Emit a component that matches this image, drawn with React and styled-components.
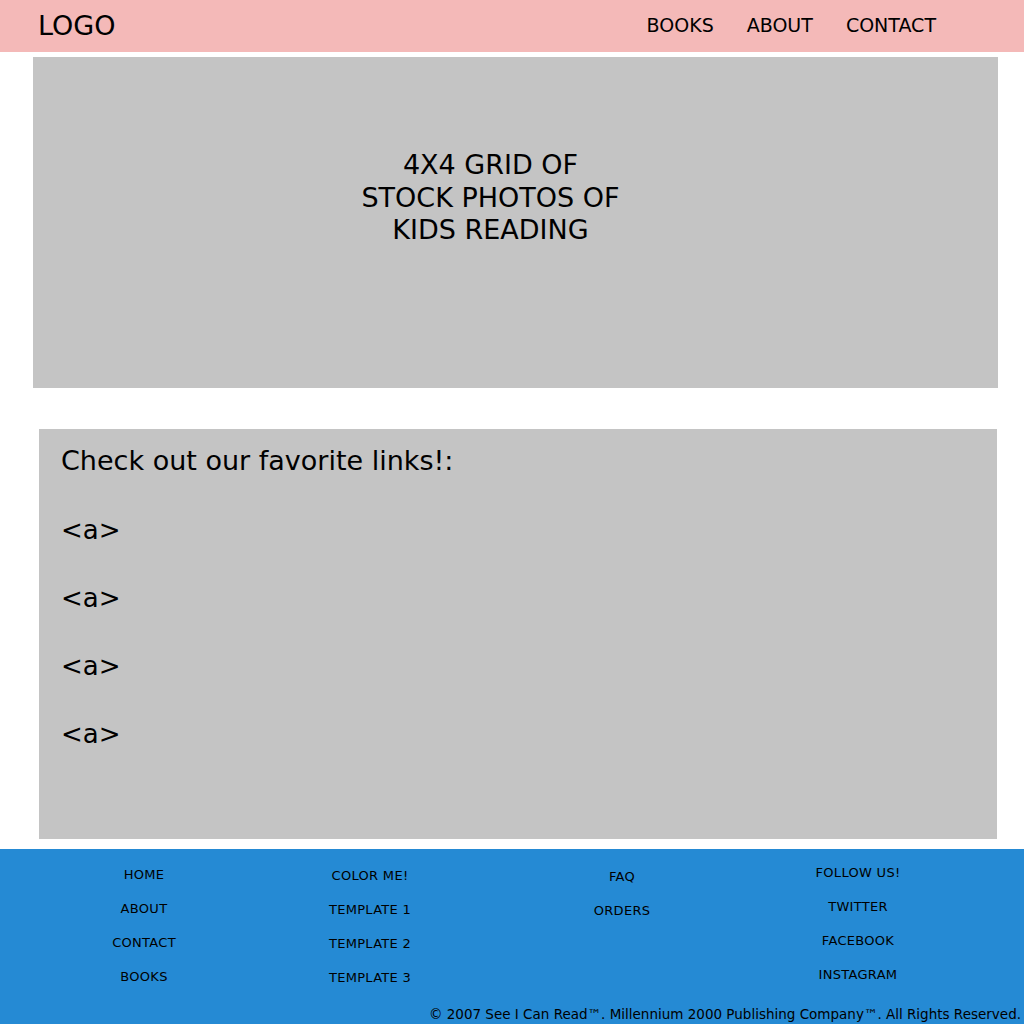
import React from "react";
import styled, { createGlobalStyle } from "styled-components";

const GlobalStyle = createGlobalStyle`
  body {
    margin: 0;
    font-family: "DejaVu Sans", Verdana, sans-serif;
    color: #000;
    background: #fff;
  }
`;

const Header = styled.header`
  display: flex;
  align-items: center;
  justify-content: space-between;
  height: 52px;
  padding: 0 88px 2px 38px;
  box-sizing: border-box;
  background: #f4b9b8;
`;

const Logo = styled.div`
  font-size: 27px;
`;

const Nav = styled.nav`
  display: flex;
  gap: 33px;
`;

const NavLink = styled.a`
  font-size: 19px;
  color: #000;
  text-decoration: none;
`;

const Main = styled.main`
  display: flex;
  flex-direction: column;
  padding: 5px 26px 10px 33px;
`;

const Hero = styled.section`
  height: 331px;
  background: #c4c4c4;
  padding: 92px 50px 0 0;
  box-sizing: border-box;
  text-align: center;
  font-size: 27px;
  line-height: 32.5px;
`;

const LinksBox = styled.section`
  margin: 41px 1px 0 6px;
  height: 410px;
  box-sizing: border-box;
  background: #c4c4c4;
  padding: 14px 22px;
`;

const LinksTitle = styled.div`
  font-size: 27px;
  line-height: 36px;
  margin-bottom: 33px;
`;

const LinkItem = styled.div`
  height: 68px;
  font-size: 26px;
  line-height: 36px;
`;

const Footer = styled.footer`
  display: flex;
  flex-direction: column;
  height: 175px;
  box-sizing: border-box;
  background: #258ad4;
  padding-top: 9px;
`;

const FooterGrid = styled.div`
  display: grid;
  grid-template-columns: 288px 164px 340px 132px;
`;

const FooterCol = styled.div`
  display: flex;
  flex-direction: column;
  align-items: center;
  margin-top: ${(p) => p.$offset || 0}px;
`;

const FooterLink = styled.a`
  font-size: 13px;
  line-height: 34px;
  color: #000;
  text-decoration: none;
  letter-spacing: 0.3px;
`;

const Copyright = styled.div`
  margin-top: auto;
  padding-right: 3px;
  text-align: right;
  font-size: 13.5px;
  line-height: 20px;
`;

const columns = [
  { offset: 0, items: ["HOME", "ABOUT", "CONTACT", "BOOKS"] },
  { offset: 1, items: ["COLOR ME!", "TEMPLATE 1", "TEMPLATE 2", "TEMPLATE 3"] },
  { offset: 2, items: ["FAQ", "ORDERS"] },
  { offset: -2, items: ["FOLLOW US!", "TWITTER", "FACEBOOK", "INSTAGRAM"] },
];

export default function App() {
  return (
    <>
      <GlobalStyle />
      <Header>
        <Logo>LOGO</Logo>
        <Nav>
          <NavLink href="#">BOOKS</NavLink>
          <NavLink href="#">ABOUT</NavLink>
          <NavLink href="#">CONTACT</NavLink>
        </Nav>
      </Header>
      <Main>
        <Hero>
          4X4 GRID OF
          <br />
          STOCK PHOTOS OF
          <br />
          KIDS READING
        </Hero>
        <LinksBox>
          <LinksTitle>Check out our favorite links!:</LinksTitle>
          {[0, 1, 2, 3].map((i) => (
            <LinkItem key={i}>&lt;a&gt;</LinkItem>
          ))}
        </LinksBox>
      </Main>
      <Footer>
        <FooterGrid>
          {columns.map((col, i) => (
            <FooterCol key={i} $offset={col.offset}>
              {col.items.map((item) => (
                <FooterLink href="#" key={item}>
                  {item}
                </FooterLink>
              ))}
            </FooterCol>
          ))}
        </FooterGrid>
        <Copyright>
          © 2007 See I Can Read™. Millennium 2000 Publishing Company™. All
          Rights Reserved.
        </Copyright>
      </Footer>
    </>
  );
}
